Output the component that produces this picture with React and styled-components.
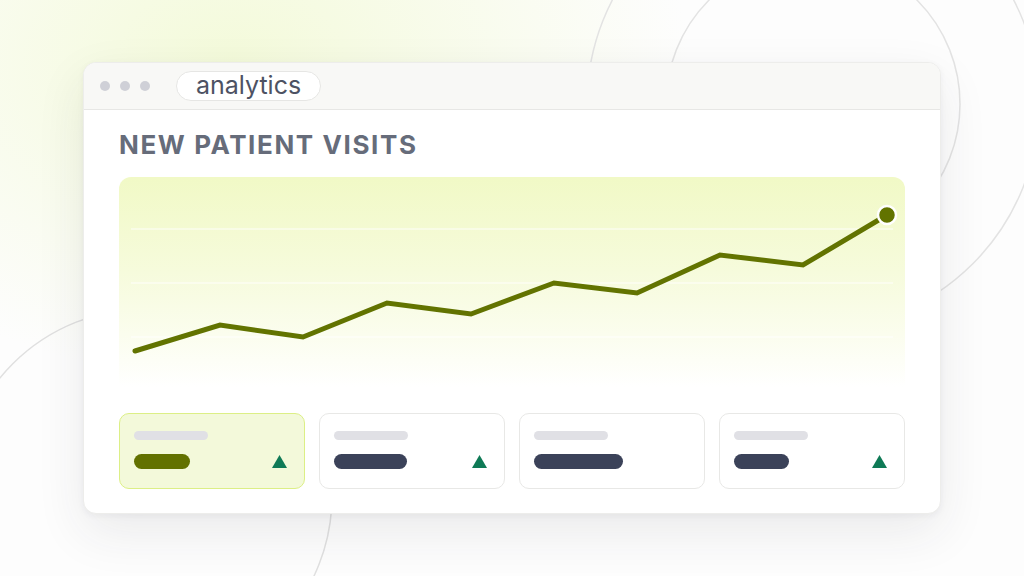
import React from 'react';
import styled, { createGlobalStyle } from 'styled-components';

const GlobalStyle = createGlobalStyle`
  html, body {
    margin: 0;
    padding: 0;
  }
  body {
    font-family: Inter, "Noto Sans", sans-serif;
    background: #fdfdfd;
  }
`;

const Page = styled.div`
  position: relative;
  width: 1024px;
  height: 576px;
  overflow: hidden;
  background:
    radial-gradient(ellipse 460px 320px at 230px 60px, rgba(236, 248, 190, 0.55), rgba(255, 255, 255, 0) 100%),
    #fdfdfd;
  padding: 62px 0 0 83px;
  box-sizing: border-box;
`;

const Backdrop = styled.svg`
  position: absolute;
  inset: 0;
  pointer-events: none;
`;

const Window = styled.div`
  position: relative;
  width: 858px;
  height: 452px;
  background: #ffffff;
  border-radius: 13px;
  box-shadow: 0 18px 50px rgba(40, 40, 60, 0.09), 0 2px 6px rgba(40, 40, 60, 0.05);
  border: 1px solid #ededeb;
  box-sizing: border-box;
  overflow: hidden;
  display: flex;
  flex-direction: column;
`;

const TitleBar = styled.div`
  height: 47px;
  flex-shrink: 0;
  background: #f8f8f6;
  border-bottom: 1.5px solid #e7e7e5;
  display: flex;
  align-items: center;
  padding-left: 16px;
  box-sizing: border-box;
`;

const Dots = styled.div`
  display: flex;
  gap: 10px;
  margin-right: 26px;
`;

const Dot = styled.span`
  width: 10px;
  height: 10px;
  border-radius: 50%;
  background: #cfd0d7;
`;

const UrlPill = styled.div`
  height: 30px;
  padding: 0 19px 1px 19px;
  border-radius: 15px;
  background: #ffffff;
  border: 1.5px solid #e6e6e4;
  display: flex;
  align-items: center;
  font-size: 25px;
  color: #4d5263;
  line-height: 1;
  box-sizing: border-box;
`;

const Body = styled.div`
  padding: 22px 35px 0 35px;
  display: flex;
  flex-direction: column;
`;

const Heading = styled.h1`
  margin: 0;
  font-size: 26px;
  line-height: 26px;
  font-weight: 700;
  letter-spacing: 1.6px;
  color: #666c7a;
`;

const Chart = styled.div`
  margin-top: 19px;
  height: 210px;
  border-radius: 12px 12px 0 0;
  background: linear-gradient(180deg, #f1f9c6 0%, #f6fbdc 45%, #fbfdee 75%, rgba(255, 255, 255, 0.9) 100%);
`;

const Tiles = styled.div`
  margin-top: 26px;
  display: grid;
  grid-template-columns: repeat(4, 1fr);
  gap: 14px;
`;

const Tile = styled.div`
  height: 76px;
  box-sizing: border-box;
  border-radius: 10px;
  border: 1.5px solid ${p => (p.$active ? '#dcef86' : '#e8e8e6')};
  background: ${p => (p.$active ? '#f3f9da' : '#ffffff')};
  padding: 17px 17px 0 14px;
  display: flex;
  flex-direction: column;
`;

const Label = styled.div`
  width: 74px;
  height: 9px;
  border-radius: 5px;
  background: #e0e0e5;
`;

const ValueRow = styled.div`
  margin-top: 14px;
  display: flex;
  align-items: center;
  justify-content: space-between;
`;

const Value = styled.div`
  height: 15px;
  border-radius: 8px;
  background: ${p => (p.$active ? '#627100' : '#3b4259')};
`;

const Trend = styled.svg`
  width: 15px;
  height: 13px;
`;

const points = [
  [16, 174], [101, 148], [184, 160], [268, 126], [352, 137],
  [435, 106], [518, 116], [601, 78], [684, 88], [768, 38],
];

const tiles = [
  { width: 56, up: true, active: true },
  { width: 73, up: true },
  { width: 89, up: false },
  { width: 55, up: true },
];

const LineChart = () => {
  const last = points[points.length - 1];
  return (
    <svg width="786" height="210" viewBox="0 0 786 210">
      {[52, 106, 160].map(y => (
        <line key={y} x1="12" x2="774" y1={y} y2={y} stroke="#ffffff" strokeOpacity="0.6" strokeWidth="1.5" />
      ))}
      <polyline
        points={points.map(p => p.join(',')).join(' ')}
        fill="none"
        stroke="#627300"
        strokeWidth="5"
        strokeLinejoin="miter"
        strokeLinecap="round"
      />
      <circle cx={last[0]} cy={last[1]} r="9" fill="#627300" stroke="#ffffff" strokeWidth="2.5" />
    </svg>
  );
};

const App = () => {
  return (
    <Page>
      <GlobalStyle />
      <Backdrop width="1024" height="576" viewBox="0 0 1024 576">
        <circle cx="813" cy="104" r="147" fill="none" stroke="#e3e3e3" strokeWidth="1.5" />
        <circle cx="813" cy="104" r="226" fill="none" stroke="#e3e3e3" strokeWidth="1.5" />
        <circle cx="145" cy="496" r="187" fill="none" stroke="#e0e0e0" strokeWidth="1.5" />
      </Backdrop>
      <Window>
        <TitleBar>
          <Dots>
            <Dot />
            <Dot />
            <Dot />
          </Dots>
          <UrlPill>analytics</UrlPill>
        </TitleBar>
        <Body>
          <Heading>NEW PATIENT VISITS</Heading>
          <Chart>
            <LineChart />
          </Chart>
          <Tiles>
            {tiles.map((t, i) => (
              <Tile key={i} $active={t.active}>
                <Label />
                <ValueRow>
                  <Value $active={t.active} style={{ width: t.width }} />
                  {t.up && (
                    <Trend viewBox="0 0 15 13">
                      <polygon points="7.5,0 15,13 0,13" fill="#0f7a56" />
                    </Trend>
                  )}
                </ValueRow>
              </Tile>
            ))}
          </Tiles>
        </Body>
      </Window>
    </Page>
  );
};

export default App;
